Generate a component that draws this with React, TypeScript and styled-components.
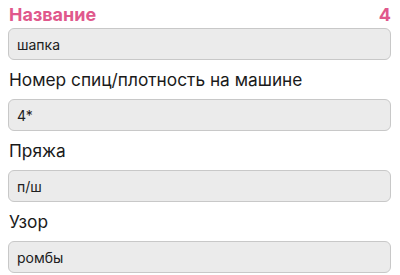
import { createGlobalStyle, styled } from "styled-components";

const GlobalStyle = createGlobalStyle`
  body {
    margin: 0;
    background: #ffffff;
    font-family: Inter, "Liberation Sans", sans-serif;
  }
`;

interface Field {
  label: string;
  value: string;
}

const fields: Field[] = [
  { label: "Номер спиц/плотность на машине", value: "4*" },
  { label: "Пряжа", value: "п/ш" },
  { label: "Узор", value: "ромбы" },
];

function App() {
  return (
    <>
      <GlobalStyle />
      <Form>
        <Header>
          <Title>Название</Title>
          <Counter>4</Counter>
        </Header>
        <ValueBox>шапка</ValueBox>
        {fields.map((f) => (
          <FieldGroup key={f.label}>
            <Label>{f.label}</Label>
            <ValueBox>{f.value}</ValueBox>
          </FieldGroup>
        ))}
      </Form>
    </>
  );
}

export default App;

const Form = styled.div`
  width: 400px;
  box-sizing: border-box;
  padding: 4px 9px 0 8px;
  display: flex;
  flex-direction: column;
`;

const Header = styled.div`
  display: flex;
  justify-content: space-between;
  align-items: baseline;
  height: 22px;
  margin-bottom: 2px;
`;

const Title = styled.span`
  font-size: 18px;
  line-height: 22px;
  font-weight: 700;
  color: #e0588c;
  padding-left: 1px;
`;

const Counter = styled(Title)`
  padding-left: 0;
`;

const FieldGroup = styled.div`
  display: flex;
  flex-direction: column;
`;

const Label = styled.div`
  font-size: 17.3px;
  line-height: 20px;
  color: #1a1a1a;
  margin: 10px 0 9px 1px;
`;

const ValueBox = styled.div`
  height: 32px;
  box-sizing: border-box;
  border: 1px solid #c8c8c8;
  border-radius: 6px;
  background: #ebebeb;
  display: flex;
  align-items: center;
  padding-left: 8px;
  font-size: 14px;
  color: #202020;
`;
